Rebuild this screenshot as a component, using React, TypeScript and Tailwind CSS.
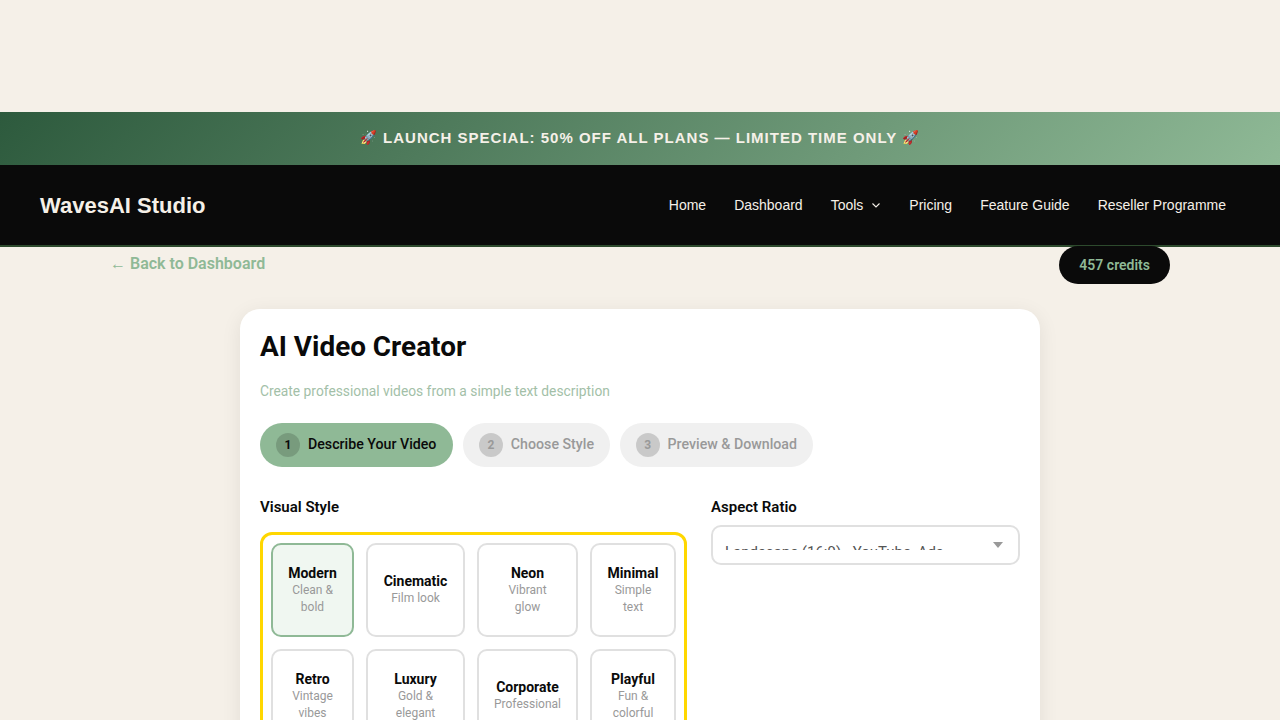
const roboto = "font-['Roboto',sans-serif]";

function Step({ n, label, active, width }: { n: number; label: string; active?: boolean; width: string }) {
  return (
    <div className={`flex h-11 items-center gap-2 rounded-full px-4 text-[14.2px] font-medium whitespace-nowrap ${width} ${active ? "bg-[#8fb996] text-[#0a0a0a]" : "bg-[#f0f0f0] text-[#999999]"}`}>
      <span className={`flex size-6 items-center justify-center rounded-full bg-[rgba(0,0,0,0.16)] text-xs font-bold`}>{n}</span>
      {label}
    </div>
  );
}

function StyleCard({ name, desc, active }: { name: string; desc: string[]; active?: boolean }) {
  return (
    <div className={`flex h-[94px] flex-col items-center justify-center rounded-[10px] border-2 px-[14px] text-center ${active ? "border-[#8fb996] bg-[#f0f7f1]" : "border-[#e0e0e0] bg-white"}`}>
      <div className="text-sm leading-[17px] font-bold text-[#0a0a0a]">{name}</div>
      <div className="text-xs leading-[17px] text-[#999999]">
        {desc.map((d) => (
          <div key={d} className="whitespace-nowrap">{d}</div>
        ))}
      </div>
    </div>
  );
}

const cards = [
  { name: "Modern", desc: ["Clean &", "bold"], active: true },
  { name: "Cinematic", desc: ["Film look"] },
  { name: "Neon", desc: ["Vibrant", "glow"] },
  { name: "Minimal", desc: ["Simple", "text"] },
  { name: "Retro", desc: ["Vintage", "vibes"] },
  { name: "Luxury", desc: ["Gold &", "elegant"] },
  { name: "Corporate", desc: ["Professional"] },
  { name: "Playful", desc: ["Fun &", "colorful"] },
];

export default function App() {
  return (
    <div className={`h-[720px] overflow-hidden bg-[#f5f0e8] pt-[112px] ${roboto}`}>
      <div className="flex h-[53px] items-center justify-center bg-[linear-gradient(135deg,#2d5a3d,#8fb996)] font-['Liberation_Sans','Noto_Color_Emoji',sans-serif] text-[15px] font-bold tracking-[1px] whitespace-pre text-[#f5f0e8]">
        <span className="text-[13.5px]">🚀</span> LAUNCH SPECIAL: 50% OFF ALL PLANS — LIMITED TIME ONLY <span className="text-[13.5px]">🚀</span>
      </div>
      <nav className="flex h-[82px] items-center justify-between border-b-2 border-[#2d4a2d] bg-[#0a0a0a] pr-[54px] pl-10 font-['Liberation_Sans',sans-serif] text-[#f5f0e8]">
        <div className="mt-px text-[22px] font-bold">WavesAI Studio</div>
        <div className="flex items-center gap-7 text-sm">
          <span>Home</span>
          <span>Dashboard</span>
          <span className="flex items-center gap-2">
            Tools
            <svg width="10" height="10" viewBox="0 0 10 10" fill="none" stroke="currentColor" strokeWidth="1.1">
              <path d="M1.5 3.5 5 7l3.5-3.5" />
            </svg>
          </span>
          <span>Pricing</span>
          <span>Feature Guide</span>
          <span>Reseller Programme</span>
        </div>
      </nav>
      <div className="mx-[110px] -mt-px flex items-start justify-between">
        <div className="mt-[6px] text-base font-semibold text-[#8fb996]">← Back to Dashboard</div>
        <div className="flex h-[38px] items-center rounded-full bg-[#0a0a0a] px-5 text-sm font-semibold text-[#8fb996]">457 credits</div>
      </div>
      <main className="mx-auto mt-[25px] w-[800px] rounded-[20px] bg-white p-5 shadow-[0_4px_20px_rgba(0,0,0,0.08)]">
        <h1 className="mt-px text-[27.9px] leading-[34px] font-bold text-[#0a0a0a]">AI Video Creator</h1>
        <p className="mt-[17px] text-[13.8px] leading-[20px] text-[#a3bfa8]">Create professional videos from a simple text description</p>
        <div className="mt-[22px] flex gap-[10px]">
          <Step n={1} label="Describe Your Video" active width="w-[193px]" />
          <Step n={2} label="Choose Style" width="w-[147px]" />
          <Step n={3} label="Preview & Download" width="w-[193px]" />
        </div>
        <div className="mt-[30px] grid grid-cols-[427px_309px] gap-6">
          <div>
            <div className="text-[15px] leading-5 font-semibold text-[#0a0a0a]">Visual Style</div>
            <div className="mt-[15px] grid grid-cols-[83px_99px_101px_86px] gap-3 rounded-xl border-[3px] border-[#ffd700] p-2">
              {cards.map((c) => (
                <StyleCard key={c.name} {...c} />
              ))}
            </div>
          </div>
          <div>
            <div className="text-[15px] leading-5 font-semibold text-[#0a0a0a]">Aspect Ratio</div>
            <div className="relative mt-2 h-10 rounded-[10px] border-2 border-[#e0e0e0] bg-white">
              <div className="mx-3 mt-[9px] h-[14px] overflow-hidden text-[15px] leading-5 whitespace-nowrap text-[#555555]">
                <div className="mt-[6px]">Landscape (16:9) - YouTube, Ads</div>
              </div>
              <div className="absolute top-[15px] right-[15px] size-0 border-x-[5px] border-t-[6px] border-x-transparent border-t-[#999999]" />
            </div>
          </div>
        </div>
      </main>
    </div>
  );
}
